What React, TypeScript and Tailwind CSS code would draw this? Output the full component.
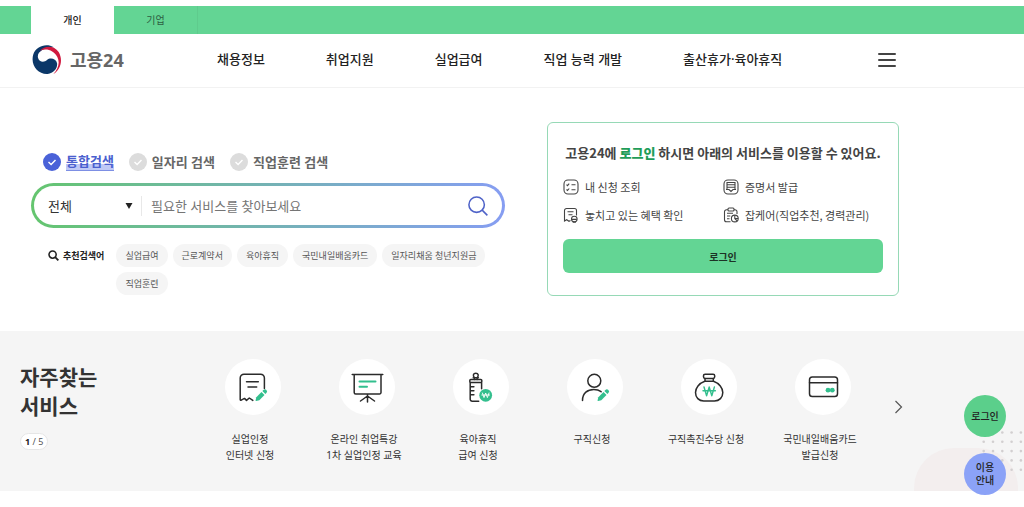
import { useState } from 'react';
import type { ReactNode } from 'react';

const fontClass = "font-['Noto_Sans','Noto_Sans_CJK_KR',sans-serif]";
const koreanFontClass = "font-['Noto_Sans_CJK_KR',sans-serif]";

const NAV_ITEMS = ['채용정보', '취업지원', '실업급여', '직업 능력 개발', '출산휴가·육아휴직'];
const SEARCH_TYPES = ['통합검색', '일자리 검색', '직업훈련 검색'];
const KEYWORDS = ['실업급여', '근로계약서', '육아휴직', '국민내일배움카드', '일자리채움 청년지원금', '직업훈련'];

const TaegeukLogo = () => (
  <svg viewBox="0 0 90 90" className="h-[30px] w-[30px]" aria-hidden>
    <path
      d="M66 7C42 -7 12 4 4 28C-6 60 18 89 47 87C66 84 78 68 75 54C72 41 55 36 45 45C36 54 21 51 18 38C14 22 34 8 66 7Z"
      fill="#0b3768"
    />
    <path
      d="M24 17C38 1 66 0 80 21C94 45 86 74 64 87C80 70 84 52 76 36C65 16 44 9 24 17Z"
      fill="#d0193f"
    />
  </svg>
);

const ListIcon = () => (
  <>
    <rect x="1" y="1" width="14" height="14" rx="4" />
    <path d="M3.5 5.7l1 1 1.7-2M3.5 10.5l1 1 1.7-2M8.5 5.8h4M8.5 10.8h4" />
  </>
);

const CertificateIcon = () => (
  <>
    <rect x="1" y="1" width="14" height="14" rx="4" />
    <path d="M4 3.5h8v7H10l-2 2-2-2H4zM4 5.8h8M4 8.2h8M3 10.5h3M10 10.5h3" />
  </>
);

const BenefitIcon = () => (
  <>
    <path d="M13.5 8.5V3.5a2 2 0 0 0-2-2h-8a2 2 0 0 0-2 2V14l2.2-1.3L6 14.3l1.5-.8M4.5 4.8h6M5.5 7.7h4" />
    <circle cx="11.3" cy="12" r="2.8" />
    <path d="M8.8 12.4h5M10.3 14.5v.8h2v-.8" />
  </>
);

const CareerIcon = () => (
  <>
    <path d="M5 2.7H3.5a2 2 0 0 0-2 2v8a2 2 0 0 0 2 2h4M11 2.7h1a2 2 0 0 1 2 2V7M4 6.3h6M4 9h3.3M4 11.7h2.5" />
    <rect x="5" y="1" width="6" height="3" rx="1" />
    <circle cx="11.8" cy="11.5" r="3.4" />
    <path d="M11.8 8.2v3.3h3.3M11.8 11.5l2.3 2.3" />
  </>
);

const BENEFITS: { label: string; icon: ReactNode }[] = [
  { label: '내 신청 조회', icon: <ListIcon /> },
  { label: '증명서 발급', icon: <CertificateIcon /> },
  { label: '놓치고 있는 혜택 확인', icon: <BenefitIcon /> },
  { label: '잡케어(직업추천, 경력관리)', icon: <CareerIcon /> },
];

const Pencil = () => (
  <g fill="#33bf8e" stroke="none">
    <path d="M16.5 27.8l.8-3.6 5.2-5.2 3 3-5.2 5.2-3.2.9z" />
    <path d="M23.4 18.1l1-1a2.1 2.1 0 0 1 3 3l-1 1z" />
  </g>
);

const SERVICES: { lines: string[]; icon: ReactNode }[] = [
  {
    lines: ['실업인정', '인터넷 신청'],
    icon: (
      <>
        <path d="M25.4 15.5V5A3.8 3.8 0 0 0 21.6 1.2H5A3.8 3.8 0 0 0 1.2 5v21.5q0 1 1 .7L5.5 25.4l2 2 2.8-2.4 3.5 2.4M7.5 8.7h11.8M9 14h8.7" />
        <Pencil />
      </>
    ),
  },
  {
    lines: ['온라인 취업특강', '1차 실업인정 교육'],
    icon: (
      <>
        <path d="M-.8 1.5h30.6M1.2 1.5v18a1.5 1.5 0 0 0 1.5 1.5h23.8a1.5 1.5 0 0 0 1.5-1.5v-18M14.5 21v8M14.5 23L7.5 28M14.5 23l7 5" />
        <path d="M6.5 8.5h16M6.5 13.8h7.5" stroke="#33bf8e" strokeWidth="2" />
      </>
    ),
  },
  {
    lines: ['육아휴직', '급여 신청'],
    icon: (
      <>
        <path d="M7.5 6.5V4.8C5.5 2.5 6.2.3 8.8.3s3.3 2.2 1.3 4.5v1.7M6.2 4.8h5.2" />
        <rect x="2.8" y="6.6" width="12" height="3" rx="1" />
        <path d="M3.2 9.8v16.4a2 2 0 0 0 2 2h6.5M14.6 9.8v6M3.2 13.7h3.7M3.2 17.8h3.7M3.2 21.8h3.7" />
        <circle cx="18.7" cy="22.3" r="6.4" fill="#33bf8e" stroke="none" />
        <path d="M15.4 20l1.6 4.6 1.7-4.6 1.7 4.6L22 20M14.8 22h7.8" stroke="#fff" strokeWidth="0.9" />
      </>
    ),
  },
  {
    lines: ['구직신청'],
    icon: (
      <>
        <circle cx="13.3" cy="7.8" r="6.5" />
        <path d="M1.5 27.5c0-7.5 5.2-11 11.3-11 3 0 5.4.8 7.3 2.2" />
        <Pencil />
      </>
    ),
  },
  {
    lines: ['구직촉진수당 신청'],
    icon: (
      <>
        <rect x="8.5" y="1.2" width="11.2" height="4.2" rx="1.6" />
        <path d="M10 5.5v2.7M18.3 5.5v2.7M9.8 8.2h8.7C24.2 10.3 27.8 15 27.8 19.5c0 5-3.5 8.5-8.3 8.5H8.7C3.9 28 .5 24.5.5 19.5.5 15 4 10.3 9.8 8.2z" />
        <path d="M9 14l2.6 8.7 2.6-8.7 2.6 8.7 2.6-8.7M8 17.8h12.4" stroke="#33bf8e" strokeWidth="1.4" />
      </>
    ),
  },
  {
    lines: ['국민내일배움카드', '발급신청'],
    icon: (
      <>
        <rect x=".5" y="4" width="28" height="19.5" rx="2.8" />
        <path d="M.5 9.8h28" />
        <g fill="#33bf8e" stroke="none">
          <circle cx="19" cy="17.2" r="2.4" />
          <circle cx="23.3" cy="17.2" r="2.4" />
        </g>
      </>
    ),
  },
];

const TopTabs = () => (
  <div className="mt-1.5 flex h-7 bg-[#63d594] pl-[31px] text-[10px] text-[#222]">
    <a href="#personal" className="flex w-[83px] items-center justify-center bg-white font-medium">
      개인
    </a>
    <a href="#company" className="flex w-21 items-center justify-center border-r border-[#5fcb8d] text-[#2d5d43]">
      기업
    </a>
  </div>
);

const Header = () => (
  <header className="flex h-[54px] items-center border-b border-[#f2f2f2] pr-[128px] pb-px pl-8">
    <a href="#home" className="flex w-[185px] shrink-0 items-center gap-2 text-[18px] font-bold text-[#666]">
      <TaegeukLogo />
      고용24
    </a>
    <nav className="flex flex-1 gap-[61px] text-[13px] font-medium whitespace-nowrap text-[#222]">
      {NAV_ITEMS.map((item) => (
        <a key={item} href="#menu">
          {item}
        </a>
      ))}
    </nav>
    <button type="button" aria-label="전체메뉴" className="flex w-[18px] flex-col gap-1">
      <span className="h-0.5 rounded bg-[#444]" />
      <span className="h-0.5 rounded bg-[#444]" />
      <span className="h-0.5 rounded bg-[#444]" />
    </button>
  </header>
);

const SearchPanel = () => {
  const [type, setType] = useState(SEARCH_TYPES[0]);

  return (
    <section className="min-w-0 flex-1 pt-[30px]">
      <div className="flex gap-[15px] pl-3 text-[13px] leading-[18px] font-bold text-[#666]">
        {SEARCH_TYPES.map((item) => (
          <label key={item} className="flex items-center gap-[5px]">
            <span className="grid place-items-center">
              <input
                type="radio"
                name="searchType"
                checked={type === item}
                onChange={() => setType(item)}
                className="col-start-1 row-start-1 h-[18px] w-[18px] appearance-none rounded-full bg-[#dcdcdc] checked:bg-[#4a62d8]"
              />
              <svg viewBox="0 0 18 18" className="pointer-events-none col-start-1 row-start-1 h-[18px] w-[18px]" aria-hidden>
                <path d="M5.5 9l2.6 2.5 4.4-4.5" fill="none" stroke="#fff" strokeWidth="1.4" />
              </svg>
            </span>
            <span
              className={
                type === item
                  ? 'border-b border-[#7d8fe4] bg-linear-to-b from-transparent from-65% to-[#bfc9f6] to-65% text-[#4a60cf]'
                  : ''
              }
            >
              {item}
            </span>
          </label>
        ))}
      </div>

      <form
        className="mt-3 rounded-full bg-linear-to-r from-[#64c56e] via-[#74b2b4] to-[#869df2] p-[3px]"
        onSubmit={(e) => e.preventDefault()}
      >
        <div className="flex h-[39px] items-center rounded-full bg-white pr-3.5 pl-3.5 text-[13px]">
          <span className="grid w-[94px] shrink-0 items-center border-r border-[#e8e8e8]">
            <select aria-label="검색 구분" className="col-start-1 row-start-1 h-5 w-full appearance-none leading-5 text-[#333]">
              <option>전체</option>
            </select>
            <svg viewBox="0 0 8 6" className="pointer-events-none col-start-1 row-start-1 mr-2 h-1.5 w-2 justify-self-end" aria-hidden>
              <path d="M.5 0h7L4 6z" fill="#222" />
            </svg>
          </span>
          <input
            type="text"
            aria-label="검색어"
            placeholder="필요한 서비스를 찾아보세요"
            className="h-6 min-w-0 flex-1 pl-[9px] outline-none placeholder:text-[#757575]"
          />
          <button type="submit" aria-label="검색">
            <svg viewBox="0 0 22 22" className="h-5 w-5" fill="none" stroke="#4f63c8" strokeWidth="1.7" aria-hidden>
              <circle cx="9.5" cy="9.5" r="8.5" />
              <path d="M15.3 15.3l6 6" />
            </svg>
          </button>
        </div>
      </form>

      <div className="mt-4 flex items-start gap-3 pl-[17px] text-[9px]">
        <div className="flex h-[23px] shrink-0 items-center gap-1 font-bold text-[#222]">
          <svg viewBox="0 0 12 12" className="h-[11px] w-[11px]" fill="none" stroke="#222" strokeWidth="1.7" aria-hidden>
            <circle cx="5" cy="5" r="3.9" />
            <path d="M7.8 7.8l3.5 3.5" strokeWidth="2" />
          </svg>
          추천검색어
        </div>
        <ul className="flex flex-wrap gap-x-[5px] gap-y-[5px] text-[#555]">
          {KEYWORDS.map((keyword) => (
            <li key={keyword}>
              <a href="#keyword" className="flex h-[23px] items-center rounded-full bg-[#f5f5f5] px-[9px]">
                {keyword}
              </a>
            </li>
          ))}
        </ul>
      </div>
    </section>
  );
};

const LoginCard = () => (
  <section
    className={`w-[352px] shrink-0 rounded-md border border-[#96d9b6] px-[15px] pt-5 pb-[22px] ${koreanFontClass}`}
  >
    <h2 className="text-center text-[13px] leading-5 font-bold whitespace-nowrap text-[#444]">
      고용24에 <strong className="text-[#1f9d59]">로그인</strong> 하시면 아래의 서비스를 이용할 수 있어요.
    </h2>
    <ul className="mt-4 grid grid-cols-2 gap-y-3 text-[11px] leading-4 text-[#444]">
      {BENEFITS.map(({ label, icon }) => (
        <li key={label} className="flex items-center gap-1.5 whitespace-nowrap">
          <svg viewBox="0 0 16 16" className="h-4 w-4 shrink-0" fill="none" stroke="#444" strokeWidth="1.1" aria-hidden>
            {icon}
          </svg>
          {label}
        </li>
      ))}
    </ul>
    <button type="button" className="mt-4 h-[34px] w-full rounded-md bg-[#63d594] text-[10px] font-bold text-[#1d3326]">
      로그인
    </button>
  </section>
);

const FrequentServices = () => (
  <section className="relative flex bg-[#f5f5f5] pr-[118px] pb-7 pl-5">
    <div className="absolute right-1.5 bottom-0 h-[43px] w-[104px] rounded-t-[40px] bg-[#f3eeee]" />
    <svg viewBox="0 0 42 42" className="absolute right-0 bottom-[18px] h-[42px] w-[42px]" aria-hidden>
      {[0, 1, 2, 3, 4].map((row) =>
        [0, 1, 2, 3, 4].map((col) => (
          <circle key={`${row}-${col}`} cx={1.7 + col * 9.3} cy={1.5 + row * 9.3} r="1.3" fill="#d2cfd0" />
        ))
      )}
    </svg>
    <div className="w-44 shrink-0 pt-8">
      <h2 className="text-[21px] leading-[29px] font-bold text-[#333]">
        자주찾는
        <br />
        서비스
      </h2>
      <p className="mt-3 inline-flex h-[17px] items-center rounded-full border border-[#e6e6e6] bg-white px-1 text-[9px] whitespace-pre text-[#555]">
        <b className="text-[#222]">1</b> / 5
      </p>
    </div>
    <ul className="grid flex-1 grid-cols-6 pt-7 text-center text-[10px] leading-4 whitespace-nowrap text-[#333]">
      {SERVICES.map(({ lines, icon }) => (
        <li key={lines[0]}>
          <a href="#service" className="flex flex-col items-center">
            <span className="grid h-14 w-14 place-items-center rounded-full bg-white">
              <svg
                viewBox="0 0 29 29"
                className="h-[29px] w-[29px] overflow-visible"
                fill="none"
                stroke="#2b2b2b"
                strokeWidth="1.5"
                strokeLinecap="round"
                strokeLinejoin="round"
                aria-hidden
              >
                {icon}
              </svg>
            </span>
            <span className="mt-4 flex flex-col pr-1.5">
              {lines.map((line) => (
                <span key={line}>{line}</span>
              ))}
            </span>
          </a>
        </li>
      ))}
    </ul>
    <button type="button" aria-label="다음" className="mt-[70px] ml-3.5 h-3 w-3">
      <svg viewBox="0 0 12 12" className="h-3 w-3 overflow-visible" fill="none" stroke="#555" strokeWidth="1.2" aria-hidden>
        <path d="M1.5 0l6 6-6 6" />
      </svg>
    </button>
  </section>
);

const FloatingButtons = () => (
  <div className="absolute top-[395px] right-[18px] flex flex-col gap-4 text-[10px] leading-[13px] font-medium text-[#222]">
    <a href="#login" className="flex h-[42px] w-[42px] items-center justify-center rounded-full bg-[#5bcf8b]">
      로그인
    </a>
    <a href="#guide" className="flex h-[42px] w-[42px] items-center justify-center rounded-full bg-[#8ba2f7] text-center">
      이용
      <br />
      안내
    </a>
  </div>
);

export default function App() {
  return (
    <div className={`relative flow-root min-h-screen bg-white ${fontClass}`}>
      <TopTabs />
      <Header />
      <main>
        <div className="flex gap-[42px] pt-[34px] pr-[125px] pb-[35px] pl-[31px]">
          <SearchPanel />
          <LoginCard />
        </div>
        <FrequentServices />
      </main>
      <FloatingButtons />
    </div>
  );
}
